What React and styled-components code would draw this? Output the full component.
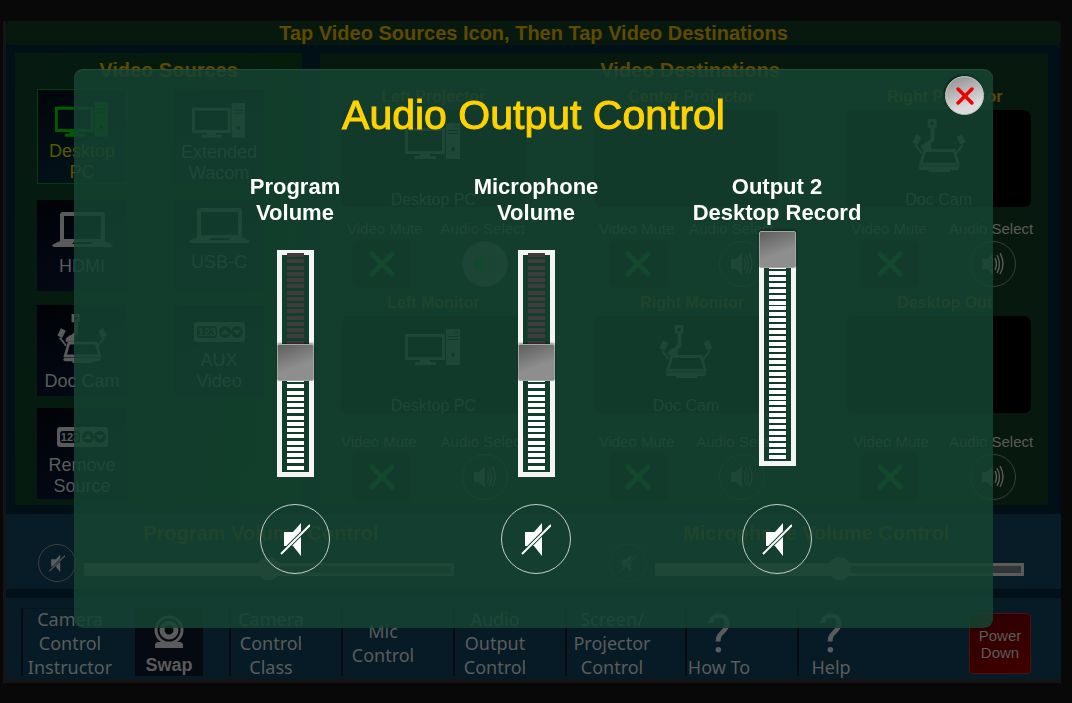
import React, { useState } from 'react'
import styled, { createGlobalStyle, css } from 'styled-components'

const GlobalStyle = createGlobalStyle`
   * {
      box-sizing: border-box;
   }
   body {
      margin: 0;
      background: #080808;
      font-family: 'Liberation Sans', Arial, sans-serif;
      color: #5b5b5b;
   }
   button {
      font: inherit;
      color: inherit;
      border: 0;
      padding: 0;
      background: none;
      cursor: pointer;
   }
   h1, h2, h3 {
      margin: 0;
   }
   svg {
      display: block;
   }
`

/* ---------- icons ---------- */

const PcIcon = ({ size = 56 }) => (
   <svg width={size} viewBox="0 0 56 37" fill="currentColor" aria-hidden="true">
      <path fillRule="evenodd" d="M0 5h40v26H0zM3 8v20h34V8z" />
      <path d="M15 31h10v2h6v3H10v-3h5z" />
      <path
         fillRule="evenodd"
         d="M41 0h14v36H41zM43 7v1h10V7zm0 3v1h10v-1zm7-7v1h3V3zm-2 21a2 2 0 1 0 .1 0z"
      />
   </svg>
)

const LaptopIcon = () => (
   <svg width="61" height="36" viewBox="0 0 61 36" fill="currentColor" aria-hidden="true">
      <path fillRule="evenodd" d="M11 0h39q3 0 3 3v26H8V3q0-3 3-3zm1 4v23h37V4z" />
      <path fillRule="evenodd" d="M8 29h45l8 4q0 2-4 2H4q-4 0-4-2zm14 1-2 2h21l-2-2z" />
   </svg>
)

const DocCamIcon = ({ size = 54 }) => (
   <svg width={size} viewBox="0 0 55 54" fill="none" stroke="currentColor" aria-hidden="true">
      <path d="M17.500 1.500h6v6h-6z" strokeWidth="3" />
      <path d="M21 9v12l-7 6" strokeWidth="4" />
      <path d="M10 30v-3l4-3h4l1 2v4z" fill="currentColor" strokeWidth="1" />
      <path d="m7 17-4 8M48 17l4 8" strokeWidth="6" />
      <path d="m3 26 7 9M52 26l-7 9" strokeWidth="2" />
      <path d="M13 32h30l4 14H9z" strokeWidth="3" />
      <path d="M8 48h40v2q0 2-2 2H9q-2 0-2-2z" fill="currentColor" stroke="none" />
      <path d="M17 51h22v3H17z" fill="currentColor" stroke="none" />
   </svg>
)

const CodeIcon = () => (
   <svg width="51" height="20" viewBox="0 0 51 20" fill="none" aria-hidden="true">
      <rect width="51" height="20" rx="3" fill="currentColor" />
      <rect x="3" y="4" width="20" height="12" rx="3" fill="#06080f" />
      <text x="13" y="14" textAnchor="middle" fontSize="11" fontWeight="bold" fill="currentColor">
         123
      </text>
      <circle cx="31" cy="10" r="6" fill="#06080f" />
      <circle cx="43" cy="10" r="6" fill="#06080f" />
      <path d="m31 7 4 5h-8zM43 13l4-5h-8z" fill="currentColor" />
   </svg>
)

const WebcamIcon = () => (
   <svg width="30" height="34" viewBox="0 0 30 34" fill="none" aria-hidden="true">
      <path d="M3 27h24l2 2v4H1v-4z" fill="currentColor" />
      <circle cx="15" cy="15" r="13" fill="#050912" stroke="currentColor" strokeWidth="3" />
      <circle cx="15" cy="15" r="7" stroke="currentColor" strokeWidth="5" />
   </svg>
)

const SpeakerIcon = () => (
   <svg width="22" height="22" viewBox="0 0 22 22" fill="currentColor" aria-hidden="true">
      <path d="M0 6h5l6-6v22l-6-6H0z" />
      <path
         d="M13 5q3 6 0 12M15 2q5 9 0 18M18 0q6 11 0 21"
         fill="none"
         stroke="currentColor"
         strokeWidth="1.400"
      />
   </svg>
)

const MutedIcon = ({ size = 30 }) => (
   <svg width={size} viewBox="0 0 30 34" aria-hidden="true">
      <path d="M4 10h9l8-9v33l-8-10H4z" fill="currentColor" />
      <path d="M1 32 30 3" stroke="var(--cut)" strokeWidth="4" />
      <path d="M1 32 30 3" stroke="currentColor" strokeWidth="2" />
   </svg>
)

const CrossIcon = ({ size, width }) => (
   <svg width={size} height={size} viewBox="0 0 26 26" aria-hidden="true">
      <path d="M3 3l20 20M23 3L3 23" stroke="currentColor" strokeWidth={width} strokeLinecap="round" />
   </svg>
)

/* ---------- page shell ---------- */

const Panel = styled.div`
   display: flex;
   flex-direction: column;
   margin: 21px 11px 20px 3px;
   border-left: 3px solid #151515;
   border-bottom: 4px solid #151515;
   background: #001016;
`

const Banner = styled.header`
   border-radius: 5px;
   background: #07190f;
   color: #5e4a00;
   text-align: center;

   h1 {
      font-size: 20px;
      line-height: 24px;
   }
`

const Main = styled.main`
   display: grid;
   grid-template-columns: 287px minmax(0, 1fr);
   gap: 18px;
   padding: 8px 13px 9px 9px;
`

const Section = styled.section`
   min-height: 452px;
   background: ${props => (props.$dotted ? 'linear-gradient(100deg, #061a12, #041c08)' : '#07190f')};
`

const SectionTitle = styled.h2`
   padding-left: ${props => props.$indent}px;
   color: #5e4a00;
   font-size: 20px;
   line-height: 34px;
   text-align: center;
`

/* ---------- video sources ---------- */

const SourceGrid = styled.div`
   display: grid;
   grid-template-columns: 90px 90px;
   grid-template-rows: 98px 92px 90px 90px;
   column-gap: 47px;
   row-gap: 13px;
   align-items: start;
   padding: 2px 22px 0;
`

const SourceTile = styled.button`
   display: flex;
   flex-direction: column;
   align-items: center;
   justify-content: flex-end;
   height: ${props => props.$height || 91}px;
   padding-bottom: ${props => props.$bottom || 0}px;
   background: linear-gradient(160deg, #000206, #040a18);
   font-size: 18px;
   line-height: 21px;
   white-space: pre-line;

   svg {
      margin-bottom: ${props => (props.$height ? 3 : 8)}px;
   }
   ${props =>
      props.$active &&
      css`
         border: 1px solid #063c0c;
         background: linear-gradient(160deg, #00060a, #02141c);
         color: #5a5700;

         svg {
            color: #005c00;
         }
      `}
`

const SOURCES = [
   { name: 'Desktop\nPC', icon: <PcIcon size={54} />, active: true, height: 95 },
   { name: 'Extended\nWacom', icon: <PcIcon size={54} />, height: 95 },
   { name: 'HDMI', icon: <LaptopIcon />, bottom: 14 },
   { name: 'USB-C', icon: <LaptopIcon />, bottom: 18 },
   { name: 'Doc Cam', icon: <DocCamIcon size={50} />, bottom: 4 },
   { name: 'AUX\nVideo', icon: <CodeIcon />, bottom: 4 },
   { name: 'Remove\nSource', icon: <CodeIcon />, bottom: 2 }
]

/* ---------- video destinations ---------- */

const DestinationGrid = styled.div`
   display: grid;
   grid-template-columns: repeat(3, minmax(0, 1fr));
   column-gap: 68px;
   row-gap: 5px;
   padding: 0 17px 0 21px;
`

const DestinationName = styled.h3`
   padding-left: ${props => props.$indent}px;
   color: #5e4a00;
   font-size: 16px;
   line-height: 20px;
   text-align: center;
   white-space: nowrap;
`

const Screen = styled.button`
   display: flex;
   flex-direction: column;
   align-items: center;
   justify-content: flex-end;
   width: 100%;
   height: 97px;
   margin-top: 3px;
   border-radius: 7px;
   background: #000;
   font-size: 16px;
   line-height: 14px;
`

const ScreenIcon = styled.span`
   display: flex;
   flex: 1;
   align-items: flex-start;
   padding-top: ${props => props.$top}px;
`

const Captions = styled.div`
   display: flex;
   gap: ${props => props.$gap}px;
   padding: ${props => props.$top}px 0 1px ${props => props.$indent}px;
   font-size: 15px;
   line-height: 20px;
   white-space: nowrap;
`

const Toggles = styled.div`
   display: flex;
   align-items: center;
   gap: 51px;
   padding-left: ${props => props.$indent}px;
`

const MuteButton = styled.button`
   display: grid;
   place-items: center;
   flex: none;
   width: 59px;
   height: 48px;
   border-radius: 7px;
   background: #030c08;
   color: #006412;
`

const RoundButton = styled.button`
   --cut: ${props => props.$cut || '#071c27'};
   display: grid;
   place-items: center;
   flex: none;
   width: ${props => props.$size}px;
   height: ${props => props.$size}px;
   border: 1px solid ${props => props.$ring || '#3c3f3f'};
   border-radius: 50%;
   ${props =>
      props.$on &&
      css`
         background: #4a5250;
         color: #006412;
      `}
`

const DESTINATIONS = [
   { name: 'Left Projector', source: 'Desktop PC', indent: 0, captions: [6, 18], toggles: 11, on: true },
   { name: 'Center Projector', indent: 10, captions: [5, 15], toggles: 15 },
   { name: 'Right Projector', source: 'Doc Cam', indent: 12, captions: [5, 22], toggles: 14 },
   { name: 'Left Monitor', source: 'Desktop PC', indent: 0, captions: [0, 24], toggles: 11, low: true },
   { name: 'Right Monitor', source: 'Doc Cam', indent: 12, captions: [5, 22], toggles: 15, low: true },
   { name: 'Desktop Out', indent: 12, captions: [7, 20], toggles: 14, low: true }
]

const Destination = ({ data }) => (
   <div>
      <DestinationName $indent={data.indent}>{data.name}</DestinationName>
      <Screen aria-label={data.name}>
         {data.source === 'Desktop PC' && (
            <ScreenIcon $top={13}>
               <PcIcon />
            </ScreenIcon>
         )}
         {data.source === 'Doc Cam' && (
            <ScreenIcon $top={9}>
               <DocCamIcon />
            </ScreenIcon>
         )}
         {data.source}
      </Screen>
      <Captions $indent={data.captions[0]} $gap={data.captions[1]} $top={data.low ? 19 : 12}>
         <span>Video Mute</span>
         <span>Audio Select</span>
      </Captions>
      <Toggles $indent={data.toggles}>
         <MuteButton aria-label={`${data.name} video mute`}>
            <CrossIcon size={26} width={5} />
         </MuteButton>
         <RoundButton $size={46} $on={data.on} aria-label={`${data.name} audio select`}>
            <SpeakerIcon />
         </RoundButton>
      </Toggles>
   </div>
)

/* ---------- volume strip ---------- */

const VolumeStrip = styled.section`
   display: grid;
   grid-template-columns: 1fr 1fr;
   column-gap: 155px;
   height: 75px;
   padding: 8px 37px 0 32px;
   background: #071c27;
`

const VolumeTitle = styled.label`
   display: block;
   padding-left: ${props => props.$indent}px;
   color: #5e4a00;
   font-size: 20px;
   font-weight: bold;
   line-height: 22px;
   text-align: center;
   white-space: nowrap;
`

const VolumeRow = styled.div`
   display: flex;
   align-items: center;
   gap: 8px;
`

const LevelInput = styled.input`
   appearance: none;
   flex: 1;
   min-width: 0;
   height: 24px;
   margin: 12px 0 0;
   background: none;

   &::-webkit-slider-runnable-track {
      height: 13px;
      border: 3px solid #5b5b5b;
      background: linear-gradient(90deg, #5b5b5b 50%, #303536 50%);
   }
   &::-webkit-slider-thumb {
      appearance: none;
      width: 23px;
      height: 23px;
      margin-top: -9px;
      border-radius: 50%;
      background: #5b5b5b;
   }
`

const Volume = ({ id, title, indent }) => (
   <div>
      <VolumeTitle htmlFor={id} $indent={indent}>
         {title}
      </VolumeTitle>
      <VolumeRow>
         <RoundButton $size={38} aria-label={`Mute ${title}`}>
            <MutedIcon size={16} />
         </RoundButton>
         <LevelInput id={id} type="range" defaultValue={50} />
      </VolumeRow>
   </div>
)

/* ---------- footer ---------- */

const Footer = styled.nav`
   display: grid;
   grid-template-columns: 114px 94px 112px 112px 112px 120px 112px 1fr auto;
   align-items: start;
   height: 81px;
   margin-top: 9px;
   padding: 10px 30px 0 15px;
   background: #071b26;
   font-family: 'Noto Sans', 'Open Sans', sans-serif;
   font-size: 18px;
`

const NavButton = styled.button`
   display: flex;
   flex-direction: column;
   align-items: center;
   justify-content: center;
   width: ${props => props.$width}px;
   height: 68px;
   border-left: 2px solid #030b11;
   border-top: 1px solid #05131b;
   line-height: 24px;

   span {
      white-space: nowrap;
   }
`

const SwapButton = styled(NavButton)`
   justify-content: flex-end;
   border: 0;
   background: #050912;
   font-family: 'Liberation Sans', Arial, sans-serif;
   font-weight: bold;

   svg {
      margin-bottom: 5px;
   }
   span {
      line-height: 22px;
   }
`

const Question = styled.b`
   padding-top: 6px;
   font: 400 53px/42px Roboto, sans-serif;
`

const PowerButton = styled.button`
   width: 62px;
   height: 61px;
   margin-top: 5px;
   border: 1px solid #4a1214;
   border-radius: 4px;
   background: linear-gradient(160deg, #2c0000, #400000);
   font-family: 'Liberation Sans', Arial, sans-serif;
   font-size: 15px;
   line-height: 17px;
`

/* ---------- audio dialog ---------- */

const Overlay = styled.div`
   position: fixed;
   inset: 0;
   padding: 69px 79px 75px 74px;
`

const Dialog = styled.section`
   position: relative;
   min-height: 559px;
   padding-top: 22px;
   border-radius: 9px;
   background: rgba(21, 68, 50, 0.86);
   box-shadow: inset 0 1px 1px rgba(70, 110, 90, 0.4);
   color: #fff;
`

const DialogTitle = styled.h2`
   color: #ffd200;
   font-size: 41px;
   font-weight: normal;
   line-height: 48px;
   text-align: center;
   -webkit-text-stroke: 1px currentColor;
`

const CloseButton = styled.button`
   position: absolute;
   top: 7px;
   right: 9px;
   display: grid;
   place-items: center;
   width: 39px;
   height: 39px;
   border: 1px solid #c8c8c8;
   border-radius: 50%;
   background: linear-gradient(160deg, #8d8d8d, #dcdcdc 75%);
   box-shadow: -1px -1px 2px rgba(0, 0, 0, 0.5);
   color: #f00000;
`

const Channels = styled.div`
   display: grid;
   grid-template-columns: repeat(3, 241px);
   justify-content: center;
   margin-top: 35px;
   padding-left: 5px;
`

const Channel = styled.div`
   display: flex;
   flex-direction: column;
   align-items: center;
`

const ChannelLabel = styled.label`
   font-size: 22px;
   font-weight: bold;
   line-height: 26px;
   text-align: center;
   white-space: pre-line;
`

const FaderSlot = styled.div`
   height: 278px;
   padding-top: 24px;
`

const Fader = styled.div`
   position: relative;
   width: 37px;
   height: ${props => props.$height}px;
   border: 5px solid #f4f4f4;
`

const Bars = styled.div`
   display: flex;
   flex-direction: column;
   justify-content: space-between;
   align-items: center;
   height: 100%;
   margin-top: -2px;
`

const Bar = styled.i`
   width: 17px;
   height: 4px;
   background: ${props => (props.$lit ? '#fff' : '#403c3e')};
`

const FaderInput = styled.input`
   position: absolute;
   inset: -24px -5px -22px;
   width: 37px;
   margin: 0;
   appearance: none;
   background: none;
   writing-mode: vertical-lr;
   direction: rtl;

   &::-webkit-slider-thumb {
      appearance: none;
      width: 37px;
      height: 37px;
      border: 1px solid #a6a6a6;
      border-radius: 2px;
      background: linear-gradient(160deg, #5e5e5e, #8e8e8e 60%);
      box-shadow: 0 -1px 2px rgba(0, 0, 0, 0.4);
   }
`

const ALL_BARS = Array.from({ length: 35 }, (_, i) => i)

const AudioChannel = ({ id, label, height, initial }) => {
   const [level, setLevel] = useState(initial)
   return (
      <Channel>
         <ChannelLabel htmlFor={id}>{label}</ChannelLabel>
         <FaderSlot>
            <Fader $height={height}>
               <Bars>
                  {ALL_BARS.map(i => (
                     <Bar key={i} $lit={(35 - i) / 35 <= level / 100} />
                  ))}
               </Bars>
               <FaderInput id={id} type="range" value={level} onChange={e => setLevel(Number(e.target.value))} />
            </Fader>
         </FaderSlot>
         <RoundButton $size={70} $ring="#c5d0cb" $cut="#143f2f" aria-label={`Mute ${label}`}>
            <MutedIcon />
         </RoundButton>
      </Channel>
   )
}

const App = () => (
   <>
      <GlobalStyle />
      <Panel>
         <Banner>
            <h1>Tap Video Sources Icon, Then Tap Video Destinations</h1>
         </Banner>
         <Main>
            <Section $dotted>
               <SectionTitle $indent={20}>Video Sources</SectionTitle>
               <SourceGrid>
                  {SOURCES.map(source => (
                     <SourceTile
                        key={source.name}
                        $active={source.active}
                        $height={source.height}
                        $bottom={source.bottom}
                     >
                        {source.icon}
                        {source.name}
                     </SourceTile>
                  ))}
               </SourceGrid>
            </Section>
            <Section>
               <SectionTitle $indent={12}>Video Destinations</SectionTitle>
               <DestinationGrid>
                  {DESTINATIONS.map(item => (
                     <Destination key={item.name} data={item} />
                  ))}
               </DestinationGrid>
            </Section>
         </Main>
         <VolumeStrip>
            <Volume id="program-level" title="Program Volume Control" indent={30} />
            <Volume id="mic-level" title="Microphone Volume Control" indent={0} />
         </VolumeStrip>
         <Footer>
            <NavButton $width={96}>
               <span>Camera</span>
               <span>Control</span>
               <span>Instructor</span>
            </NavButton>
            <SwapButton $width={68}>
               <WebcamIcon />
               <span>Swap</span>
            </SwapButton>
            <NavButton $width={82}>
               <span>Camera</span>
               <span>Control</span>
               <span>Class</span>
            </NavButton>
            <NavButton $width={82}>
               <span>Mic</span>
               <span>Control</span>
            </NavButton>
            <NavButton $width={82}>
               <span>Audio</span>
               <span>Output</span>
               <span>Control</span>
            </NavButton>
            <NavButton $width={92}>
               <span>Screen/</span>
               <span>Projector</span>
               <span>Control</span>
            </NavButton>
            <NavButton $width={66}>
               <Question>?</Question>
               <span>How To</span>
            </NavButton>
            <NavButton $width={66}>
               <Question>?</Question>
               <span>Help</span>
            </NavButton>
            <PowerButton>Power Down</PowerButton>
         </Footer>
      </Panel>
      <Overlay>
         <Dialog role="dialog" aria-labelledby="audio-title">
            <DialogTitle id="audio-title">Audio Output Control</DialogTitle>
            <CloseButton aria-label="Close">
               <CrossIcon size={18} width={5} />
            </CloseButton>
            <Channels>
               <AudioChannel id="out-program" label={'Program\nVolume'} height={227} initial={50} />
               <AudioChannel id="out-mic" label={'Microphone\nVolume'} height={227} initial={50} />
               <AudioChannel id="out-record" label={'Output 2\nDesktop Record'} height={216} initial={100} />
            </Channels>
         </Dialog>
      </Overlay>
   </>
)

export default App
